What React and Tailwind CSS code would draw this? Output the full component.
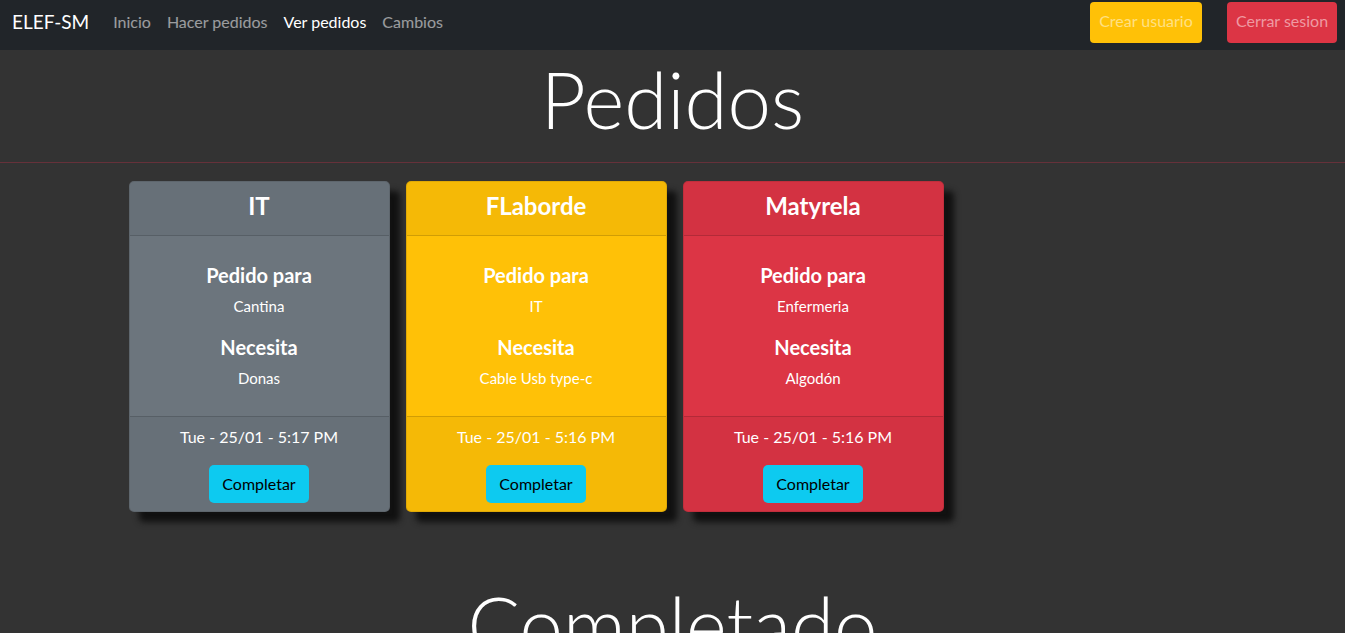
import React from 'react';

const pedidos = [
  { de: 'IT', para: 'Cantina', necesita: 'Donas', fecha: 'Tue - 25/01 - 5:17 PM', bg: 'bg-[#6c757d]' },
  { de: 'FLaborde', para: 'IT', necesita: 'Cable Usb type-c', fecha: 'Tue - 25/01 - 5:16 PM', bg: 'bg-[#ffc107]' },
  { de: 'Matyrela', para: 'Enfermeria', necesita: 'Algodón', fecha: 'Tue - 25/01 - 5:16 PM', bg: 'bg-[#dc3545]' },
];

const PedidoCard = ({ pedido }) => (
  <div className={`w-[261px] ${pedido.bg} rounded-[5px] border border-black/[0.12] text-white text-center shadow-[10px_10px_6px_#111]`}>
    <div className="h-[54px] pb-[6px] flex items-center justify-center bg-black/[0.04] border-b border-black/[0.15]">
      <h3 className="text-[24px] font-bold leading-none">{pedido.de}</h3>
    </div>
    <div className="pt-[27px] pb-[26px]">
      <h5 className="text-[20px] font-bold leading-[24px]">Pedido para</h5>
      <p className="mt-[7px] text-[15px] leading-[24px]">{pedido.para}</p>
      <h5 className="mt-[17px] text-[20px] font-bold leading-[24px]">Necesita</h5>
      <p className="mt-[7px] text-[15px] leading-[24px]">{pedido.necesita}</p>
    </div>
    <div className="bg-black/[0.04] border-t border-black/[0.15] pt-[8px] pb-[8px] flex flex-col items-center">
      <p className="text-[16px] leading-[24px]">{pedido.fecha}</p>
      <button className="mt-[16px] w-[100px] h-[38px] rounded-[5px] bg-[#0dcaf0] text-black text-[16px]">
        Completar
      </button>
    </div>
  </div>
);

export default function App() {
  return (
    <div className="min-h-screen bg-[#333333] font-['Lato','Open_Sans',sans-serif] overflow-hidden">
      <nav className="bg-[#212529] h-[50px] flex items-center justify-between pl-[12px] pr-[8px]">
        <div className="flex items-center -mt-[6px]">
          <span className="text-white text-[19px] mr-[16px]">ELEF-SM</span>
          <ul className="flex text-[16px]">
            <li className="px-[8px] text-white/55">Inicio</li>
            <li className="px-[8px] text-white/55">Hacer pedidos</li>
            <li className="px-[8px] text-white">Ver pedidos</li>
            <li className="px-[8px] text-white/55">Cambios</li>
          </ul>
        </div>
        <div className="flex items-center gap-[25px] -mt-[5px]">
          <a className="w-[112px] h-[41px] pb-[3px] flex items-center justify-center rounded-[4px] bg-[#ffc107] text-[#ffe083] text-[16px]">
            Crear usuario
          </a>
          <a className="w-[110px] h-[41px] pb-[3px] flex items-center justify-center rounded-[4px] bg-[#dc3545] text-[#ef9aa2] text-[16px]">
            Cerrar sesion
          </a>
        </div>
      </nav>

      <h1 className="pt-[2px] text-center text-white text-[78px] font-light leading-[94px]">Pedidos</h1>
      <hr className="mt-[16px] border-0 h-px bg-[#66313a]" />

      <div className="w-[1140px] mx-auto mt-[18px] px-[26px] flex gap-[16px]">
        {pedidos.map((p, i) => (
          <PedidoCard key={i} pedido={p} />
        ))}
      </div>

      <h1 className="mt-[65px] text-center text-white text-[78px] font-light leading-[94px]">Completado</h1>
    </div>
  );
}
